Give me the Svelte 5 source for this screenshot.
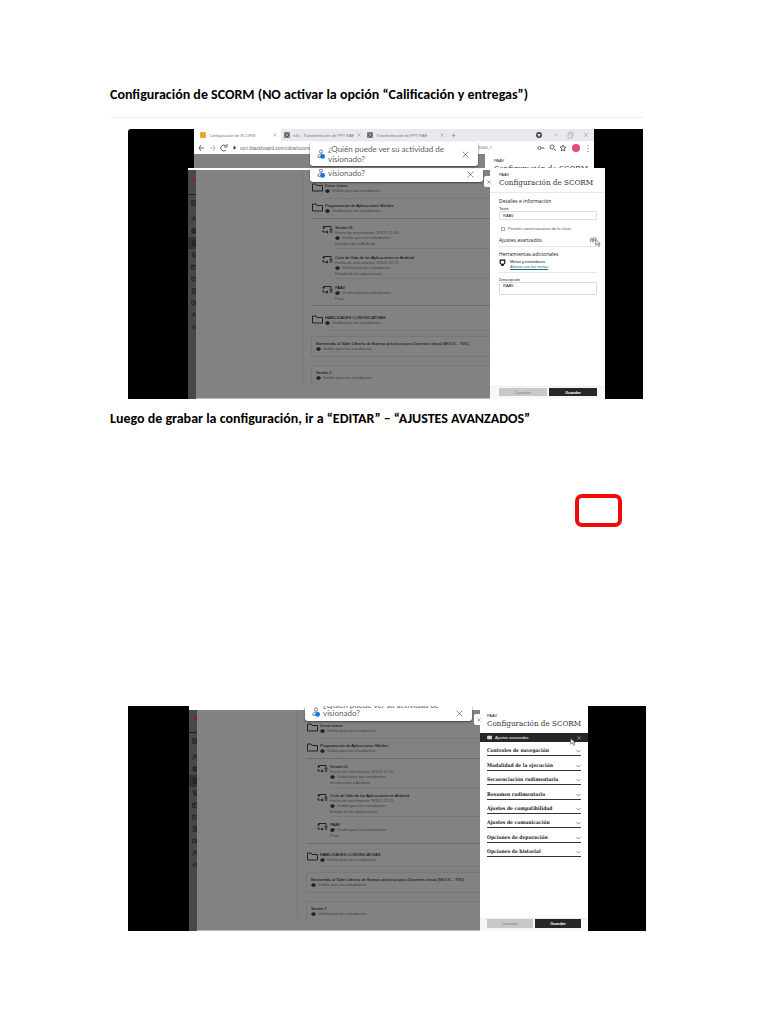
<script lang="ts">
  type Kind = 'folder' | 'item' | 'card';

  interface Row {
    kind: Kind;
    title: string;
    due?: string;
    hidden?: boolean;
    note?: string;
    last?: boolean;
  }

  const rows: Row[] = [
    { kind: 'folder', title: 'Dictar temas' },
    { kind: 'folder', title: 'Programación de Aplicaciones Móviles', last: true },
    { kind: 'item', title: 'Sesión 01', due: 'Fecha de vencimiento: 3/3/21 21:40', note: 'Introducción a Android' },
    { kind: 'item', title: 'Ciclo de Vida de las Aplicaciones en Android', due: 'Fecha de vencimiento: 3/3/21 22:21', note: 'Estado de las aplicaciones' },
    { kind: 'item', title: 'PAAV', hidden: true, note: 'Paav', last: true },
    { kind: 'folder', title: 'HABILIDADES COMUNICATIVAS' },
    { kind: 'card', title: 'Bienvenida al Taller Librería de Buenas prácticas para Docentes virtual (MOOC - TVD)' },
    { kind: 'card', title: 'Sesión 2' },
  ];

  const settings = [
    'Controles de navegación',
    'Modalidad de la ejecución',
    'Secuenciación rudimentaria',
    'Resumen rudimentario',
    'Ajustes de compatibilidad',
    'Ajustes de comunicación',
    'Opciones de depuración',
    'Opciones de historial',
  ];

  const tabs = [
    { title: 'Configuración de SCORM', active: true },
    { title: 'n3o - Transformación de PPT RAE', active: false },
    { title: 'Transformación de PPT RAE', active: false },
  ];

  // Sidebar glyphs, top to bottom
  const sideIcons = [
    'M1 1h3v3H1zM6 1h3v3H6zM1 6h3v3H1zM6 6h3v3H6z',
    'M5 1a2 2 0 1 1 0 4a2 2 0 1 1 0-4M1 10c0-6 8-6 8 0',
    'M5 1a4 4 0 1 0 0 8a4 4 0 1 0 0-8M1 5h8M5 1v8M2 3h6M2 7h6',
    'M2 1h6v8H2zM4 4h3M4 6h3',
    'M2 1h4v3H2zM5 6h4v3H5zM3 4v4h2',
    'M1 2h8v7H1zM1 4h8M4 2v7',
    'M1 2h8v6H1zM1 2l4 4l4-4',
    'M2 1h6v8H2zM4 3h3M4 5h3M4 7h3',
    'M1 2h8v6H1zM5 4h4v2H5z',
    'M5 1a2 2 0 1 1 0 4a2 2 0 1 1 0-4M1 10c0-6 8-6 8 0',
    'M8 2H4L1 5l3 3h4M2 5h7',
  ];
</script>

{#snippet cross()}
  <svg viewBox="0 0 10 10" aria-hidden="true"><path d="M1 1l8 8M9 1l-8 8" /></svg>
{/snippet}

{#snippet toast()}
  <svg class="person" viewBox="0 0 10 12" aria-hidden="true">
    <circle cx="5" cy="3" r="2" />
    <path d="M1 10c0-5 7-5 8-1M1 10h4" />
    <circle class="dot" cx="7" cy="9" r="3" />
  </svg>
  <p>¿Quién puede ver su actividad de<br />visionado?</p>
  <button class="icon-btn" type="button" aria-label="Cerrar aviso">{@render cross()}</button>
{/snippet}

{#snippet sidebar()}
  <nav class="sidebar" aria-label="Principal">
    <svg class="logo" viewBox="0 0 10 10" aria-hidden="true"><path d="M2 1h8v8H6L2 6z" /></svg>
    {#each sideIcons as d, i}
      <span class="side-item" class:current={i === 3}>
        <svg viewBox="0 0 10 10" aria-hidden="true"><path {d} /></svg>
      </span>
    {/each}
  </nav>
{/snippet}

{#snippet outline()}
  <ul class="outline">
    {#each rows as row}
      <li class="row {row.kind}" class:last={row.last} class:brief={row.kind === 'item' && !row.due}>
        {#if row.kind === 'folder'}
          <svg class="kind-icon" viewBox="0 0 22 18" aria-hidden="true"><path d="M1 16V2h7l2 3h11v11z" /></svg>
        {:else if row.kind === 'item'}
          <svg class="kind-icon scorm" viewBox="0 0 22 18" aria-hidden="true">
            <path d="M3 7V3h15v8M3 7l-2-2M3 7l3-2M7 14H2v-4M15 14h6M8 14l3-2v4zM18 11l-3-2M18 11l3-2" />
          </svg>
        {/if}
        <div class="row-text">
          <strong>{row.title}</strong>
          {#if row.due}<span>{row.due}</span>{/if}
          <span class="visibility">
            <svg viewBox="0 0 10 8" aria-hidden="true">
              <path d="M0 4c3-5 7-5 10 0c-3 5-7 5-10 0z" />
              {#if row.hidden}<path class="slash" d="M1 8L9 0" />{/if}
            </svg>
            {row.hidden ? 'Oculto para los estudiantes' : 'Visible para los estudiantes'}
          </span>
          {#if row.note}<span class="note">{row.note}</span>{/if}
        </div>
      </li>
    {/each}
  </ul>
{/snippet}

{#snippet panelHead()}
  <header class="panel-head">
    <small>PAAV</small>
    <h2>Configuración de SCORM</h2>
  </header>
{/snippet}

{#snippet pointer()}
  <svg class="pointer" viewBox="0 0 10 14" aria-hidden="true"><path d="M1 1v10l3-3l2 5l2-1l-2-4h3z" /></svg>
{/snippet}

{#snippet footer()}
  <footer class="panel-foot">
    <button type="button" class="cancel">Cancelar</button>
    <button type="button" class="save">Guardar</button>
  </footer>
{/snippet}

<main class="page">
  <h1>Configuración de SCORM (NO activar la opción “Calificación y entregas”)</h1>
  <hr />

  <figure class="shot first">
    <div class="strip">
      <div class="browser">
        <div class="tabs">
          {#each tabs as tab, i}
            <div class="tab" class:active={tab.active}>
              <svg class="favicon" viewBox="0 0 10 10" aria-hidden="true">
                <rect width="10" height="10" rx="1" />
                <path d={i === 0 ? 'M2 8l6-6' : 'M2 2l6 6M8 2l-6 6'} />
              </svg>
              <span>{tab.title}</span>
              <button class="icon-btn" type="button" aria-label="Cerrar pestaña">{@render cross()}</button>
            </div>
          {/each}
          <svg class="plus" viewBox="0 0 10 10" aria-hidden="true"><path d="M5 1v8M1 5h8" /></svg>
          <svg class="window-controls" viewBox="0 0 54 10" aria-hidden="true">
            <circle cx="4" cy="5" r="3" />
            <path d="M2 4h4l-2 3z" class="mark" />
            <path d="M19 5h4M33 4h4v4h-4zM34 4V2h4v4h-1M49 3l4 4M53 3l-4 4" />
          </svg>
        </div>
        <div class="toolbar">
          <svg class="nav-icons" viewBox="0 0 30 10" aria-hidden="true">
            <path d="M6 5H1M3 2L1 5l2 3" />
            <path class="dim" d="M12 5h5M15 2l2 3l-2 3" />
            <path d="M28 3a3 3 0 1 0 0 4M29 1v3h-3" />
          </svg>
          <svg class="lock" viewBox="0 0 6 8" aria-hidden="true"><path d="M1 4h4v3H1zM2 4V1h2v3" /></svg>
          <span class="url">ucn.blackboard.com/ultra/courses/</span>
          <span class="url rest">_105508_1</span>
          <svg class="tool-icons" viewBox="0 0 54 10" aria-hidden="true">
            <path d="M2 5a1 1 0 1 0 3 0a1 1 0 1 0-3 0M5 5h3v1" />
            <path d="M14 4a2 2 0 1 0 4 0a2 2 0 1 0-4 0M18 6l2 2" />
            <path d="M27 2l1 2h2l-2 2l1 2l-2-1l-2 1l1-2l-2-2h2z" />
            <circle cx="40" cy="5" r="4" />
            <path d="M52 2v1M52 5v1M52 8v1" />
          </svg>
        </div>
        <div class="peek">
          <aside>{@render panelHead()}</aside>
        </div>
        <div class="toast">{@render toast()}</div>
      </div>
    </div>

    <div class="screen">
      {@render sidebar()}
      <div class="course">
        {@render outline()}
        <div class="toast cut">{@render toast()}</div>
      </div>
      <aside class="panel">
        <button class="close-tab icon-btn" type="button" aria-label="Cerrar panel">{@render cross()}</button>
        {@render panelHead()}
        <form>
          <h3>Detalles e información</h3>
          <label for="texto">Texto</label>
          <input id="texto" type="text" value="RAAV" />
          <label class="check"><input type="checkbox" />Permitir conversaciones de la clase</label>
          <div class="advanced">
            <h3>Ajustes avanzados</h3>
            <svg class="gear" viewBox="0 0 12 10" aria-hidden="true"><path d="M1 9V2h3v7M6 9V1h4v8M1 5h10" /></svg>
            {@render pointer()}
          </div>
          <h3>Herramientas adicionales</h3>
          <div class="goals">
            <svg viewBox="0 0 12 12" aria-hidden="true"><path d="M2 2h8v5l-2 2H4L2 7zM4 11h4" /></svg>
            <div>
              <span>Metas y estándares</span>
              <a href="#metas">Alinear con las metas</a>
            </div>
          </div>
          <label for="descripcion">Descripción</label>
          <textarea id="descripcion">RAAV</textarea>
        </form>
        {@render footer()}
      </aside>
    </div>
  </figure>

  <h1>Luego de grabar la configuración, ir a “EDITAR” – “AJUSTES AVANZADOS”</h1>

  <div class="gap">
    <div class="mark-box"></div>
  </div>

  <figure class="shot second">
    <div class="screen">
      {@render sidebar()}
      <div class="course">
        {@render outline()}
        <div class="toast cut">{@render toast()}</div>
      </div>
      <aside class="panel">
        <button class="close-tab icon-btn" type="button" aria-label="Cerrar panel">{@render cross()}</button>
        {@render panelHead()}
        <div class="bar">
          <svg viewBox="0 0 10 10" aria-hidden="true"><path d="M1 2h8v6H1z" /></svg>
          <span>Ajustes avanzados</span>
          {@render pointer()}
          <button class="icon-btn" type="button" aria-label="Cerrar ajustes">{@render cross()}</button>
        </div>
        <div class="settings">
          {#each settings as name}
            <button type="button">
              {name}
              <svg viewBox="0 0 10 6" aria-hidden="true"><path d="M1 1l4 4l4-4" /></svg>
            </button>
          {/each}
        </div>
        {@render footer()}
      </aside>
    </div>
  </figure>
</main>

<style>
  :global(body) {
    margin: 0;
    background: #fff;
  }

  .page {
    padding: 85px 125px 93px 110px;
    font-family: 'Liberation Sans', sans-serif;
    color: #222;
  }

  .page * {
    box-sizing: border-box;
  }

  h1 {
    margin: 0;
    font: bold 14px/20px Carlito, Lato, sans-serif;
    color: #000;
    white-space: nowrap;
  }

  hr {
    margin: 12px 0 11px;
    border: 0;
    border-top: 1px solid #eee;
  }

  h2,
  h3,
  p,
  ul {
    margin: 0;
    padding: 0;
  }

  svg {
    flex: none;
    fill: none;
    stroke: currentColor;
  }

  button,
  input,
  textarea {
    margin: 0;
    padding: 0;
    border: 0;
    border-radius: 0;
    background: none;
    font: inherit;
    color: inherit;
  }

  .icon-btn {
    display: flex;
    align-items: center;
    justify-content: center;
  }

  .icon-btn svg {
    width: 6px;
    height: 6px;
  }

  .shot {
    margin: 0 0 10px 18px;
    background: #000;
    overflow: hidden;
    font-size: 4px;
    line-height: 5px;
  }

  .first {
    border-top-left-radius: 3px;
  }

  .second {
    margin: 0 -3px 0 18px;
  }

  /* Browser chrome behind the front window */
  .strip {
    height: 39px;
    padding: 0 49px 0 66px;
    overflow: hidden;
  }

  .browser {
    position: relative;
  }

  .tabs {
    display: flex;
    align-items: center;
    height: 12px;
    background: #e8e9ee;
    color: #777;
  }

  .tab {
    display: flex;
    align-items: center;
    gap: 3px;
    width: 83px;
    height: 12px;
    padding: 0 3px;
    white-space: nowrap;
  }

  .tab.active {
    width: 87px;
    padding: 0 4px 0 6px;
    background: #fff;
  }

  .tab span {
    flex: 1;
    overflow: hidden;
  }

  .tab .icon-btn svg {
    width: 4px;
    height: 4px;
  }

  .favicon {
    width: 6px;
    height: 6px;
    fill: #555;
    stroke: #ddd;
  }

  .active .favicon {
    fill: #e99a20;
    stroke: #f9d090;
  }

  .plus {
    width: 5px;
    height: 5px;
    margin-left: 4px;
  }

  .window-controls {
    width: 54px;
    height: 10px;
    margin-left: auto;
    margin-right: 5px;
    color: #bbb;
  }

  .window-controls circle {
    fill: #444;
    stroke: none;
  }

  .window-controls .mark {
    fill: #ddd;
    stroke: none;
  }

  .toolbar {
    display: flex;
    align-items: center;
    height: 13px;
    padding: 0 4px;
    background: #fff;
    color: #666;
  }

  .nav-icons {
    width: 30px;
    height: 10px;
  }

  .dim {
    stroke: #bbb;
  }

  .lock {
    width: 3px;
    height: 5px;
    margin: 0 4px 0 5px;
    fill: #444;
  }

  .url {
    width: 76px;
    overflow: hidden;
    font-size: 5px;
    line-height: 6px;
  }

  .url.rest {
    width: auto;
    margin-left: 156px;
    font-size: 4px;
  }

  .tool-icons {
    width: 54px;
    height: 10px;
    margin-left: auto;
  }

  .tool-icons circle {
    fill: #e8467c;
    stroke: none;
  }

  .peek {
    display: flex;
    justify-content: flex-end;
    height: 14px;
    background: #828282;
  }

  .peek aside {
    width: 109px;
    background: #fff;
  }

  /* Notice that floats over the course */
  .toast {
    position: absolute;
    top: 13px;
    left: 116px;
    display: flex;
    align-items: center;
    gap: 3px;
    width: 168px;
    height: 24px;
    padding: 0 9px 0 7px;
    border-radius: 3px;
    background: #fff;
    box-shadow: 0 1px 2px #444;
    color: #5c5c66;
    font: 8px/10px Lato, sans-serif;
    white-space: nowrap;
  }

  .toast p {
    flex: 1;
  }

  .toast .icon-btn svg {
    width: 7px;
    height: 7px;
  }

  .toast .person {
    width: 8px;
    height: 10px;
  }

  .person .dot {
    fill: #1673e6;
    stroke: none;
  }

  .toast.cut {
    top: -1px;
    left: 114px;
    align-items: flex-end;
    width: 173px;
    height: 13px;
    padding-bottom: 4px;
    border-radius: 0 0 3px 3px;
    overflow: hidden;
  }

  .second .toast.cut {
    top: -4px;
    left: 108px;
    width: 167px;
    height: 15px;
    line-height: 8px;
  }

  .screen {
    display: flex;
    min-height: 231px;
    padding: 0 38px 0 60px;
  }

  .second .screen {
    min-height: 225px;
    padding: 0 58px 0 61px;
  }

  .sidebar {
    width: 8px;
    padding-top: 7px;
    overflow: hidden;
    border-top: 2px solid #fff;
    background: #484848;
    color: #161616;
  }

  .second .sidebar {
    padding-top: 5px;
    border-top-width: 4px;
  }

  .logo {
    display: block;
    width: 5px;
    height: 6px;
    margin: 0 0 11px 4px;
    fill: #a3152b;
    stroke: none;
  }

  .side-item {
    display: flex;
    align-items: center;
    height: 12px;
    padding-left: 3px;
  }

  .side-item:first-of-type {
    height: 19px;
    padding-bottom: 3px;
    border-top: 1px solid #30161c;
  }

  .side-item.current {
    background: #333;
  }

  .side-item svg {
    width: 6px;
    height: 6px;
  }

  .course {
    position: relative;
    flex: 1;
    min-width: 0;
    border-top: 2px solid #fff;
    border-bottom: 1px solid #b9bcc0;
    background: #828282;
    color: #404040;
  }

  .second .course {
    border-top-width: 4px;
  }

  .outline {
    height: 216px;
    margin-left: 106px;
    padding: 9px 0 0 8px;
    border-left: 1px solid #777;
    list-style: none;
  }

  .second .outline {
    height: 208px;
    margin-left: 100px;
  }

  .row {
    display: flex;
    gap: 2px;
    white-space: nowrap;
  }

  .row-text {
    display: flex;
    flex: 1;
    flex-direction: column;
    min-width: 0;
  }

  .row-text strong {
    font-weight: normal;
    color: #000;
  }

  .visibility {
    display: flex;
    align-items: center;
    gap: 2px;
  }

  .visibility svg {
    width: 5px;
    height: 4px;
    fill: #222;
    stroke: none;
  }

  .visibility .slash {
    stroke: #222;
  }

  .kind-icon {
    width: 11px;
    height: 9px;
    color: #222;
    stroke-width: 2;
  }

  .folder {
    height: 20px;
    padding: 4px 0 0 1px;
  }

  .folder .row-text {
    border-bottom: 1px solid #797979;
  }

  .folder.last .row-text {
    border: 0;
  }

  .row.last {
    border-bottom: 1px solid #6c6c6c;
  }

  .item {
    height: 30px;
    padding: 6px 0 0 11px;
  }

  .item .row-text {
    border-bottom: 1px solid #797979;
  }

  .item.last .row-text {
    border: 0;
  }

  .item .note {
    margin-top: 1px;
  }

  .item.brief {
    height: 27px;
  }

  .brief + .folder {
    height: 25px;
    padding-top: 9px;
  }

  .card {
    height: 21px;
    margin-top: 5px;
    padding: 4px 0 0 4px;
    border: 1px solid #777;
    border-right: 0;
    border-radius: 2px 0 0 2px;
  }

  .card + .card {
    margin-top: 8px;
    border-bottom: 0;
  }

  .second .item {
    height: 29px;
    padding-top: 5px;
  }

  .second .brief {
    height: 27px;
  }

  .second .brief + .folder {
    height: 23px;
    padding-top: 8px;
  }

  /* Settings panel */
  .panel {
    position: relative;
    display: flex;
    flex-direction: column;
    width: 115px;
    background: #fff;
  }

  .second .panel {
    width: 108px;
  }

  .close-tab {
    position: absolute;
    top: 8px;
    left: -6px;
    width: 10px;
    height: 11px;
    border-radius: 2px;
    background: #fff;
  }

  .close-tab svg {
    width: 4px;
    height: 4px;
  }

  .panel-head {
    padding: 4px 0 0 9px;
  }

  .panel-head small {
    display: block;
    font-size: 4px;
    line-height: 5px;
  }

  h2 {
    font: 8px/11px 'DejaVu Serif Condensed', 'DejaVu Serif', serif;
    color: #333;
    white-space: nowrap;
  }

  .first .panel .panel-head {
    height: 25px;
    border-bottom: 1px solid #e8e8e8;
  }

  .second .panel-head {
    height: 27px;
    padding: 7px 0 0 7px;
  }

  form {
    display: flex;
    flex: 1;
    flex-direction: column;
    padding: 5px 8px 0 9px;
  }

  h3 {
    font: 5px/7px 'Open Sans', sans-serif;
    color: #111;
  }

  label {
    margin-top: 1px;
  }

  form > input,
  textarea {
    height: 9px;
    padding: 0 3px;
    border: 1px solid #ddd;
    border-radius: 1px;
  }

  textarea {
    height: 13px;
    resize: none;
  }

  .check {
    display: flex;
    align-items: center;
    gap: 3px;
    margin: 6px 0 3px 2px;
    color: #555;
  }

  .check input {
    appearance: none;
    width: 4px;
    height: 4px;
    border: 1px solid #aaa;
  }

  .advanced {
    position: relative;
    display: flex;
    align-items: center;
    justify-content: space-between;
    height: 13px;
    margin-bottom: 4px;
    border-bottom: 1px solid #e8e8e8;
  }

  .gear {
    width: 7px;
    height: 6px;
    color: #93428f;
  }

  .pointer {
    position: absolute;
    top: 5px;
    right: -4px;
    width: 6px;
    height: 8px;
    fill: #fff;
    stroke: #444;
  }

  .goals {
    display: flex;
    gap: 4px;
    height: 15px;
    margin-bottom: 3px;
    padding-top: 1px;
    border-bottom: 1px solid #e8e8e8;
    color: #111;
  }

  .goals svg {
    width: 7px;
    height: 7px;
    stroke-width: 2;
  }

  .goals div {
    display: flex;
    flex-direction: column;
  }

  .goals a {
    color: #286b90;
  }

  .panel-foot {
    display: flex;
    gap: 2px;
    height: 13px;
    padding: 1px 8px 3px 9px;
    background: #f7f7f7;
    border-top: 1px solid #eee;
  }

  .second .panel-foot {
    padding: 0 7px 3px;
  }

  .panel-foot button {
    flex: 1;
    background: #c8c8c8;
    color: #777;
    text-align: center;
  }

  .panel-foot .save {
    background: #262626;
    color: #fff;
    font-weight: bold;
  }

  .bar {
    position: relative;
    display: flex;
    align-items: center;
    gap: 3px;
    height: 9px;
    padding: 0 7px;
    background: #262626;
    color: #fff;
  }

  .bar > svg:first-child {
    width: 5px;
    height: 5px;
    fill: #ccc;
  }

  .bar span {
    flex: 1;
  }

  .bar .icon-btn svg {
    width: 4px;
    height: 4px;
  }

  .bar .pointer {
    right: 12px;
  }

  .settings {
    display: grid;
    grid-auto-rows: 1fr;
    height: 115px;
    margin: 0 7px auto;
  }

  .settings button {
    display: flex;
    align-items: flex-end;
    justify-content: space-between;
    padding-bottom: 1px;
    border-bottom: 1px solid #333;
    color: #222;
    font: bold 5px/7px 'DejaVu Serif Condensed', 'DejaVu Serif', serif;
  }

  .settings svg {
    width: 5px;
    height: 6px;
  }

  .gap {
    display: flex;
    justify-content: flex-end;
    height: 277px;
    padding: 65px 21px 0 0;
  }

  .mark-box {
    width: 47px;
    height: 33px;
    border: 4px solid #f00a0a;
    border-radius: 7px;
  }
</style>
